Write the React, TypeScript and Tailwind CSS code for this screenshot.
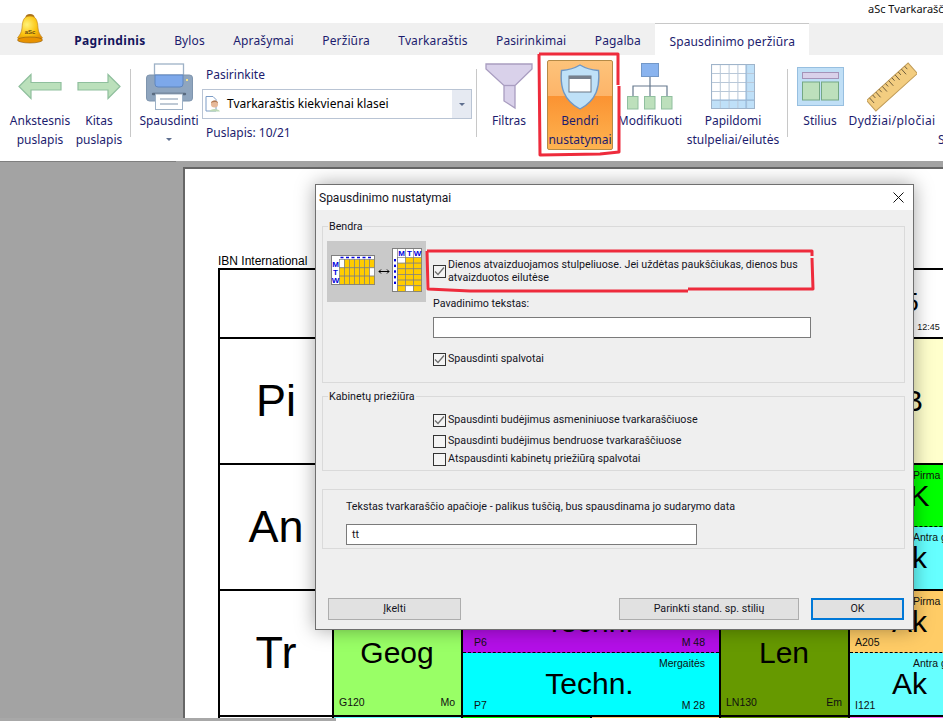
import React from "react";

const tabs = ["Pagrindinis", "Bylos", "Aprašymai", "Peržiūra", "Tvarkaraštis", "Pasirinkimai", "Pagalba", "Spausdinimo peržiūra"];

function Bell() {
  return (
    <svg width="28" height="30" viewBox="0 0 28 30" className="absolute left-[16px] top-[14px]">
      <defs>
        <radialGradient id="bellg" cx="0.38" cy="0.35" r="0.75">
          <stop offset="0" stopColor="#fff27a" />
          <stop offset="0.55" stopColor="#fbc410" />
          <stop offset="1" stopColor="#e28a00" />
        </radialGradient>
      </defs>
      <ellipse cx="14" cy="3.5" rx="4.5" ry="3.5" fill="#a8701c" />
      <path d="M14 2C7 2 6.5 8 6 14 5.6 19 3.5 21 1.5 24 3 27.5 25 27.5 26.5 24 24.5 21 22.4 19 22 14 21.5 8 21 2 14 2Z" fill="url(#bellg)" stroke="#b97c10" strokeWidth="0.6" />
      <ellipse cx="14" cy="26" rx="12.5" ry="3" fill="#e89200" stroke="#8a5a10" strokeWidth="0.6" />
      <text x="14" y="20" textAnchor="middle" fontSize="6" fontWeight="700" fill="#6b4a10" fontFamily="Liberation Sans">aSc</text>
    </svg>
  );
}

function ArrowIcon({ flip }: { flip?: boolean }) {
  return (
    <svg width="44" height="27" viewBox="0 0 44 27" className={flip ? "scale-x-[-1]" : ""}>
      <path d="M1 13.5 13 1.5V9.5H43V17H13V25.5Z" fill="#bbe0bb" stroke="#8fbf9d" strokeWidth="1.2" />
    </svg>
  );
}

function PrinterIcon() {
  return (
    <svg width="47" height="47" viewBox="0 0 47 47">
      <rect x="8.5" y="1" width="29" height="24" fill="#fff" stroke="#9db1c6" strokeWidth="1.3" />
      <rect x="0.5" y="12" width="46" height="26" rx="3" fill="#8fa5be" stroke="#7f95ae" />
      <path d="M9 12H37V21a3 3 0 0 1-3 3H12a3 3 0 0 1-3-3Z" fill="#7da8ea" stroke="#5f86bf" />
      <rect x="40" y="16" width="2" height="2" fill="#f2e28a" />
      <path d="M7 31H39" stroke="#5a6b80" strokeWidth="2.4" strokeLinecap="round" />
      <rect x="9.5" y="31" width="27" height="15.5" fill="#fff" stroke="#9db1c6" />
      <path d="M14 36H32M14 41H32" stroke="#a9b8c8" strokeWidth="1.4" />
    </svg>
  );
}

function FunnelIcon() {
  return (
    <svg width="48" height="47" viewBox="0 0 48 47">
      <path d="M1 1H47V6L30 22.5V45L19 38V22.5L1 6Z" fill="#d9d1ea" stroke="#a99dc0" strokeWidth="1.3" />
      <path d="M19 22.5H30" stroke="#a99dc0" strokeWidth="1.3" />
    </svg>
  );
}

function ShieldIcon() {
  return (
    <svg width="40" height="46" viewBox="0 0 40 46">
      <path d="M20 1C15 4 8 6 1.5 6.5 0 22 3 36 20 45 37 36 40 22 38.5 6.5 32 6 25 4 20 1Z" fill="#bfe1f8" stroke="#6f97c4" strokeWidth="1.4" />
      <rect x="9" y="12" width="22" height="16" fill="#fff" stroke="#6b7684" />
      <rect x="9" y="12" width="22" height="3" fill="#77818e" />
    </svg>
  );
}

function OrgIcon() {
  return (
    <svg width="46" height="47" viewBox="0 0 46 47">
      <rect x="14.5" y="0.5" width="17" height="13" fill="#8ab4ef" stroke="#7398c8" />
      <path d="M23 14V33M6 33V23H40V33" stroke="#66798e" strokeWidth="1.2" fill="none" />
      <rect x="0.5" y="33.5" width="10.5" height="12.5" fill="#bde0bc" stroke="#90bf9f" />
      <rect x="17.5" y="33.5" width="10.5" height="12.5" fill="#bde0bc" stroke="#90bf9f" />
      <rect x="34.5" y="33.5" width="10.5" height="12.5" fill="#bde0bc" stroke="#90bf9f" />
    </svg>
  );
}

function GridIcon() {
  const c = [0, 1, 2, 3, 4];
  return (
    <svg width="44" height="45" viewBox="0 0 44 45">
      <rect x="0.5" y="0.5" width="43" height="44" fill="#fff" stroke="#b5c3d3" strokeWidth="1.2" />
      <rect x="35" y="0.5" width="8.5" height="44" fill="#bfe0f8" />
      <rect x="0.5" y="36" width="43" height="8.5" fill="#bfe0f8" />
      {c.map((i) => (
        <React.Fragment key={i}>
          <path d={`M${8.8 * i + 0.5} 0.5V44.5`} stroke="#b9c8d8" strokeWidth="1" />
          <path d={`M0.5 ${9 * i + 0.5}H43.5`} stroke="#b9c8d8" strokeWidth="1" />
        </React.Fragment>
      ))}
      <path d="M35 0.5V44.5M0.5 36H43.5" stroke="#8eb4d8" strokeWidth="1" />
      <rect x="0.5" y="0.5" width="43" height="44" fill="none" stroke="#9fb4ca" strokeWidth="1" />
    </svg>
  );
}

function StyleIcon() {
  return (
    <svg width="47" height="39" viewBox="0 0 47 39">
      <rect x="0.5" y="0.5" width="46" height="38" fill="#c0dff6" stroke="#97bfe0" />
      <rect x="5.5" y="5.5" width="36" height="6" fill="#d9d1ea" stroke="#a493b8" />
      <rect x="5.5" y="15" width="17" height="18" fill="#bde0bc" stroke="#74a884" />
      <rect x="24.5" y="15" width="17" height="18" fill="#bde0bc" stroke="#74a884" />
    </svg>
  );
}

function RulerIcon() {
  const t = [0, 1, 2, 3, 4, 5, 6, 7, 8, 9, 10, 11];
  return (
    <svg width="50" height="50" viewBox="0 0 50 50">
      <g transform="rotate(-42 25 25)">
        <rect x="-3" y="18" width="56" height="14" fill="#f3cd80" stroke="#c09c58" />
        {t.map((i) => (
          <path key={i} d={`M${1 + i * 4.3} 18V${i % 2 ? 22 : 25}`} stroke="#6b5a3a" strokeWidth="0.9" />
        ))}
      </g>
    </svg>
  );
}

function DocPerson() {
  return (
    <svg width="16" height="16" viewBox="0 0 16 16">
      <path d="M1 0.5H8L11 3.5V15H1Z" fill="#fff" stroke="#7c9cc6" />
      <circle cx="9.5" cy="8" r="3.6" fill="#e6b99a" />
      <path d="M6 7C6 3.5 13 3.5 13 7 11.5 5.5 8 5.5 6 7Z" fill="#b07a55" />
      <path d="M4.5 15.5C5 12 14 12 15 15.5Z" fill="#bcd9b6" />
    </svg>
  );
}

function RibbonBtn({ icon, l1, l2, w, ml, caret, wide }: { icon: React.ReactNode; l1: string; l2?: string; w: string; ml?: string; caret?: boolean; wide?: boolean }) {
  return (
    <div className={`${w} ${ml ?? ""} shrink-0 flex flex-col items-center pt-[8px]`}>
      <div className="h-[47px] flex items-center justify-center">{icon}</div>
      <div className={`whitespace-nowrap leading-[20px] mt-[1px] ${wide ? "tracking-[0.35px]" : ""}`}>{l1}</div>
      {l2 && <div className="whitespace-nowrap leading-[20px] -mt-[1px]">{l2}</div>}
      {caret && <div className="mt-[7px] w-0 h-0 border-l-[3px] border-r-[3px] border-t-[3px] border-l-transparent border-r-transparent border-t-[#5f6f8f]" />}
    </div>
  );
}

function Sep({ ml }: { ml: string }) {
  return <div className={`${ml} w-px h-[68px] mt-[14px] bg-[#c8c8c8] shrink-0`} />;
}

function Check({ on }: { on?: boolean }) {
  return (
    <span className="w-[13px] h-[13px] shrink-0 border border-[#333333] bg-[#f4f4f4] flex items-center justify-center">
      {on && (
        <svg width="11" height="11" viewBox="0 0 11 11">
          <path d="M1 5.5 4 8.5 10 1.5" fill="none" stroke="#6e6e6e" strokeWidth="1.3" />
        </svg>
      )}
    </span>
  );
}

function CheckRow({ on, label, className }: { on?: boolean; label: string; className?: string }) {
  return (
    <div className={`flex items-center gap-[2px] h-[16px] ${className ?? ""}`}>
      <Check on={on} />
      <span className="whitespace-nowrap">{label}</span>
    </div>
  );
}

function MiniTables() {
  const yellow = "#ffcc00";
  const grey = "#7f7f7f";
  return (
    <svg width="99" height="61" viewBox="0 0 99 61" className="shrink-0 bg-[#c9c9c9]">
      <rect x="4.5" y="14.5" width="43" height="29" fill="#fff" stroke={grey} strokeWidth="1" />
      {[0, 1, 2].map((r) =>
        [0, 1, 2, 3, 4, 5, 6].map((c) => {
          const white = (r === 0 && c === 0) || (r === 1 && c === 6);
          return <rect key={`h${r}${c}`} x={12.5 + c * 5} y={18.5 + r * 8.3} width={5} height={8.3} fill={white ? "#fff" : yellow} stroke={grey} strokeWidth="0.7" />;
        })
      )}
      {[0, 1, 2, 3, 4, 5].map((c) => (
        <path key={c} d={`M${13.5 + c * 5.5} 16.5H${16.5 + c * 5.5}`} stroke="#0000dd" strokeWidth="1.5" />
      ))}
      {["M", "T", "W"].map((t, i) => (
        <text key={t} x="8.5" y={25.5 + i * 8.3} textAnchor="middle" fontSize="8" fontWeight="700" fill="#0000dd" fontFamily="Liberation Sans">{t}</text>
      ))}
      <path d="M52 30.5H62M54 28.5 52 30.5 54 32.5M60 28.5 62 30.5 60 32.5" stroke="#000" strokeWidth="1" fill="none" />
      <rect x="65.5" y="7.5" width="29" height="43" fill="#fff" stroke={grey} strokeWidth="1" />
      {[0, 1, 2, 3, 4, 5].map((r) =>
        [0, 1, 2].map((c) => {
          const white = (r === 0 && c === 0) || (r === 5 && c === 1);
          return <rect key={`w${r}${c}`} x={70.5 + c * 8} y={16.5 + r * 5.65} width={8} height={5.65} fill={white ? "#fff" : yellow} stroke={grey} strokeWidth="0.7" />;
        })
      )}
      <path d="M70.5 7.5V50.5M78.5 7.5V16M86.5 7.5V16" stroke={grey} strokeWidth="0.7" />
      {["M", "T", "W"].map((t, i) => (
        <text key={t} x={74.5 + i * 8} y="15" textAnchor="middle" fontSize="8" fontWeight="700" fill="#0000dd" fontFamily="Liberation Sans">{t}</text>
      ))}
      {[0, 1, 2, 3, 4].map((r) => (
        <rect key={r} x="67" y={18 + r * 5.65} width="2" height="2.4" fill="#0000dd" />
      ))}
    </svg>
  );
}

function Cell({ bg, big, top, bl, br, half, bottomDash, wideLabel }: { bg: string; big?: string; top?: string; bl?: string; br?: string; half?: boolean; bottomDash?: boolean; wideLabel?: boolean }) {
  return (
    <div
      className={`${half ? "h-1/2 pb-[3px]" : "h-full pb-[6px]"} ${wideLabel ? "pl-[11px] pr-[14px]" : half ? "pl-[5px] pr-[13px]" : "pl-[5px] pr-[6px]"} ${bottomDash ? "border-b border-dashed border-black" : ""} flex flex-col text-[10.5px] leading-[14px] text-[#101010] overflow-hidden`}
      style={{ backgroundColor: bg }}
    >
      <div className={`h-[14px] ${half ? "mt-[3px]" : "mt-[6px]"} pl-[58px] whitespace-nowrap`}>{top ?? ""}</div>
      <div className="flex-1 min-h-0 flex items-center justify-center text-[30px] leading-[30px] text-black whitespace-nowrap">{big ?? ""}</div>
      <div className="h-[14px] flex justify-between whitespace-nowrap">
        <span>{bl ?? ""}</span>
        <span>{br ?? ""}</span>
      </div>
    </div>
  );
}

function Split({ a, b, span2 }: { a: React.ReactNode; b: React.ReactNode; span2?: boolean }) {
  return (
    <div className={`${span2 ? "col-span-2" : ""} h-full border-r-2 border-b-2 border-black flex flex-col`}>
      {a}
      {b}
    </div>
  );
}

function Full({ children }: { children: React.ReactNode }) {
  return <div className="h-full border-r-2 border-b-2 border-black">{children}</div>;
}

function RowHead({ t }: { t: string }) {
  return <div className="h-full border-r-2 border-b-2 border-black flex items-center justify-center text-[45px] leading-none pb-[2px] text-black">{t}</div>;
}

function Timetable() {
  return (
    <div className="border-l-2 border-t-2 border-black w-[900px] grid grid-cols-[114px_129px_129px_129px_129px_129px] grid-rows-[69px_126px_126px_126px_126px] font-['Liberation_Sans',Arial,sans-serif]">
      <div className="border-r-2 border-b-2 border-black" />
      {["1", "2", "3", "4"].map((n) => (
        <div key={n} className="border-r-2 border-b-2 border-black flex items-center justify-center text-[26px]">{n}</div>
      ))}
      <div className="border-r-2 border-b-2 border-black flex flex-col items-center">
        <div className="text-[26px] leading-[30px] mt-[17px] pr-[4px]">5</div>
        <div className="text-[9px] leading-[14px] pl-[30px] mt-[3px] whitespace-nowrap text-[#111111]">12:45</div>
      </div>

      <RowHead t="Pi" />
      <Full><Cell bg="#ffff99" big="Mat" /></Full>
      <Full><Cell bg="#66ffff" big="Ang" /></Full>
      <Full><Cell bg="#ffcc66" big="Lit" /></Full>
      <Full><Cell bg="#99ff66" big="Bio" /></Full>
      <Full><Cell bg="#ffffcc" big="B" /></Full>

      <RowHead t="An" />
      <Full><Cell bg="#99ff66" big="Fiz" /></Full>
      <Full><Cell bg="#ffcc66" big="Mat" /></Full>
      <Full><Cell bg="#66ffff" big="Ist" /></Full>
      <Full><Cell bg="#669900" big="Len" /></Full>
      <Split
        a={<Cell half bottomDash bg="#00ff00" big="AK" top="Pirma grupė" />}
        b={<Cell half bg="#66ffff" big="Ak" top="Antra grupė" />}
      />

      <RowHead t="Tr" />
      <Full><Cell bg="#99ff66" big="Geog" bl="G120" br="Mo" /></Full>
      <Split
        span2
        a={<Cell half wideLabel bottomDash bg="#b40fe8" big="Techn." bl="P6" br="M 48" />}
        b={
          <div className="h-1/2 bg-[#00ffff] pl-[11px] pr-[14px] pb-[3px] flex flex-col text-[10.5px] leading-[14px] text-[#101010]">
            <div className="h-[14px] mt-[3px] text-right">Mergaitės</div>
            <div className="flex-1 min-h-0 flex items-center justify-center text-[30px] leading-[30px] text-black">Techn.</div>
            <div className="h-[14px] flex justify-between"><span>P7</span><span>M 28</span></div>
          </div>
        }
      />
      <Full><Cell bg="#669900" big="Len" bl="LN130" br="Em" /></Full>
      <Split
        a={<Cell half bottomDash bg="#ffcc66" big="Ak" top="Pirma grupė" bl="A205" />}
        b={<Cell half bg="#66ffff" big="Ak" top="Antra grupė" bl="I121" />}
      />

      <div className="border-r-2 border-black" />
      <div className="border-r-2 border-black bg-[#66ffff]" />
      <div className="border-r-2 border-black bg-[#00ff00]" />
      <div className="border-r-2 border-black bg-[#ffcc66]" />
      <div className="border-r-2 border-black bg-[#669900]" />
      <div className="border-r-2 border-black bg-[#ff66ff]" />
    </div>
  );
}

function Dialog() {
  return (
    <div className="absolute left-[315px] top-[184px] w-[599px] h-[446px] border border-[#6f6f6f] bg-[#efefef] shadow-[0_0_18px_rgba(0,0,0,0.35)] text-[10.7px] leading-[16px] text-[#14141e] font-['Roboto',sans-serif] flex flex-col">
      <div className="h-[25px] bg-white flex items-center justify-between pl-[3px] pr-[9px] shrink-0">
        <span className="text-[12px]">Spausdinimo nustatymai</span>
        <svg width="11" height="11" viewBox="0 0 11 11">
          <path d="M0.5 0.5 10.5 10.5M10.5 0.5 0.5 10.5" stroke="#111" strokeWidth="1" />
        </svg>
      </div>

      <div className="relative ml-[6px] w-[583px] mt-[16px] h-[157px] border border-[#dadada] pl-[4px] pt-[14px] flex gap-[7px] shrink-0">
        <span className="absolute left-[5px] -top-[8px] px-[1px] bg-[#efefef]">Bendra</span>
        <MiniTables />
        <div className="flex flex-col w-[440px]">
          <div className="flex items-center gap-[2px] pt-[17px]">
            <Check on />
            <span className="leading-[13px]">Dienos atvaizduojamos stulpeliuose. Jei uždėtas paukščiukas, dienos bus<br />atvaizduotos eilutėse</span>
          </div>
          <div className="mt-[12px]">Pavadinimo tekstas:</div>
          <div className="mt-[5px] w-[378px] h-[21px] border border-[#7a7a7a] bg-white" />
          <CheckRow on label="Spausdinti spalvotai" className="mt-[13px]" />
        </div>
      </div>

      <div className="relative ml-[6px] w-[583px] mt-[13px] h-[75px] border border-[#dadada] pl-[110px] pt-[15px] shrink-0">
        <span className="absolute left-[5px] -top-[8px] px-[1px] bg-[#efefef]">Kabinetų priežiūra</span>
        <CheckRow on label="Spausdinti budėjimus asmeniniuose tvarkaraščiuose" />
        <CheckRow label="Spausdinti budėjimus bendruose tvarkaraščiuose" className="mt-[5px]" />
        <CheckRow label="Atspausdinti kabinetų priežiūrą spalvotai" className="mt-[2px]" />
      </div>

      <div className="ml-[6px] w-[583px] mt-[18px] h-[60px] border border-[#dadada] pl-[23px] pt-[9px] shrink-0">
        <div className="whitespace-nowrap">Tekstas tvarkaraščio apačioje - palikus tuščią, bus spausdinama jo sudarymo data</div>
        <div className="mt-[9px] w-[351px] h-[21px] border border-[#7a7a7a] bg-white flex items-center pl-[5px]">tt</div>
      </div>

      <div className="mt-[49px] flex pl-[12px] pr-[9px] shrink-0">
        <button className="w-[133px] h-[22px] bg-[#e1e1e1] border border-[#adadad]">Įkelti</button>
        <button className="ml-auto w-[180px] h-[22px] bg-[#e1e1e1] border border-[#adadad]">Parinkti stand. sp. stilių</button>
        <button className="ml-[12px] w-[93px] h-[22px] bg-[#e1e1e1] border-2 border-[#0078d7]">OK</button>
      </div>
    </div>
  );
}

export default function App() {
  return (
    <div className="relative w-[943px] h-[721px] overflow-hidden bg-white text-[12px] font-['Noto_Sans','Open_Sans',sans-serif]">
      <div className="h-[23px] flex justify-end items-start text-[11px] leading-[18px] text-[#111111] whitespace-nowrap">
        <span className="w-[75px] overflow-hidden">aSc Tvarkaraščiai</span>
      </div>

      <div className="h-[32px] bg-[#f0f0f0] flex pl-[60px] text-[#1c1c6e] tracking-[0.12px]">
        {tabs.map((t, i) => (
          <div
            key={t}
            className={`px-[14.25px] pt-[4px] flex items-center whitespace-nowrap ${i === 0 ? "font-bold text-[#14145c] tracking-[0.35px]" : ""} ${i === 7 ? "bg-white border-t border-[#c8c8c8]" : ""}`}
          >
            {t}
          </div>
        ))}
      </div>

      <div className="h-[106px] bg-white flex pl-[10px] text-[#1c1c6e]">
        <RibbonBtn icon={<ArrowIcon />} l1="Ankstesnis" l2="puslapis" w="w-[60px]" />
        <RibbonBtn icon={<ArrowIcon flip />} l1="Kitas" l2="puslapis" w="w-[58px]" />
        <Sep ml="ml-[2px]" />
        <RibbonBtn icon={<PrinterIcon />} l1="Spausdinti" w="w-[60px]" ml="ml-[8px]" caret />
        <div className="ml-[3px] w-[270px] shrink-0 flex flex-col">
          <div className="pl-[4px] mt-[12px] leading-[16px]">Pasirinkite</div>
          <div className="mt-[6px] h-[30px] border border-[#b9c4d4] flex items-center">
            <span className="ml-[2px] mr-[6px]"><DocPerson /></span>
            <span className="flex-1 text-black text-[12px] whitespace-nowrap">Tvarkaraštis kiekvienai klasei</span>
            <span className="w-[19px] h-full bg-[#e6eaf2] flex items-center justify-center">
              <span className="w-0 h-0 border-l-[3px] border-r-[3px] border-t-[3px] border-l-transparent border-r-transparent border-t-[#5f6f8f]" />
            </span>
          </div>
          <div className="pl-[4px] mt-[6px] leading-[16px]">Puslapis: 10/21</div>
        </div>
        <Sep ml="ml-[4px]" />
        <RibbonBtn icon={<FunnelIcon />} l1="Filtras" w="w-[48px]" ml="ml-[8px]" />
        <div className="ml-[14px] mt-[5px] w-[66px] h-[90px] shrink-0 rounded-[2px] border border-[#b58a46] bg-[linear-gradient(#fdc37a_0%,#fdb469_40%,#fb9332_40%,#feb350_100%)] flex flex-col items-center pt-[3px]">
          <div className="h-[47px] flex items-center justify-center"><ShieldIcon /></div>
          <div className="leading-[20px] mt-[1px]">Bendri</div>
          <div className="leading-[20px] -mt-[1px] whitespace-nowrap">nustatymai</div>
        </div>
        <RibbonBtn icon={<OrgIcon />} l1="Modifikuoti" w="w-[66px]" ml="ml-[4px]" />
        <RibbonBtn icon={<GridIcon />} l1="Papildomi" l2="stulpeliai/eilutės" w="w-[94px]" ml="ml-[3px]" />
        <Sep ml="ml-[7px]" />
        <RibbonBtn icon={<StyleIcon />} l1="Stilius" w="w-[46px]" ml="ml-[9px]" />
        <RibbonBtn icon={<RulerIcon />} l1="Dydžiai/pločiai" w="w-[86px]" ml="ml-[6px]" wide />
        <div className="ml-[3px] mt-[75px] leading-[20px]">S</div>
      </div>

      <div className="h-[557px] bg-[#a3a3a3] flex flex-col overflow-hidden">
        <div className="h-px w-[176px] bg-[#7f7f7f] shrink-0" />
        <div className="flex-1 pl-[183px] pt-[5px] min-h-0">
          <div className="h-[560px] bg-white border-l-2 border-t-2 border-[#666666] pl-[33px] pt-[85px] overflow-hidden">
            <div className="h-[14px] text-[12px] leading-[14px] text-black font-['Liberation_Sans',Arial,sans-serif] whitespace-nowrap">IBN International</div>
            <Timetable />
          </div>
        </div>
      </div>

      <div className="h-[3px] flex">
        <div className="w-[336px] bg-[#a8a8a8]" />
      </div>

      <Bell />
      <Dialog />

      <svg width="943" height="721" viewBox="0 0 943 721" className="absolute inset-0 pointer-events-none" fill="none" stroke="#ee2b3c" strokeWidth="3" strokeLinejoin="round">
        <path d="M539 54H618V85M619 86V152L600 154 540 155 539 54" />
        <path d="M427 251H812V256M812 258 813 289 688 289M688 291H470L428 289 427 251" />
      </svg>
    </div>
  );
}
